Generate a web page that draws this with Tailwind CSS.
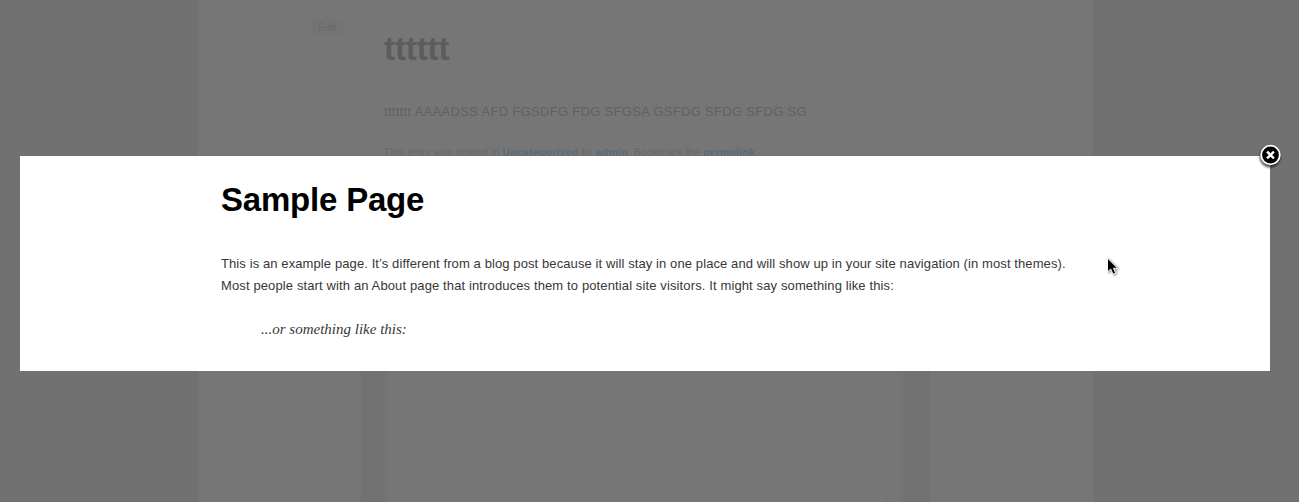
<!DOCTYPE html>
<html lang="en">
<head>
<meta charset="utf-8">
<title>Sample Page</title>
<script src="https://cdn.jsdelivr.net/npm/@tailwindcss/browser@4"></script>
</head>
<body class="relative h-[502px] overflow-hidden bg-[#717171] font-['Liberation_Sans',Arial,sans-serif]">
  <!-- Dimmed blog post -->
  <main class="ml-[198px] flex h-[502px] w-[895px] flex-col bg-[#767676]">
    <article class="flex h-[371px] shrink-0">
      <div class="w-[186px] pt-[19px] pl-[113px]">
        <a class="flex h-[17px] w-[32px] items-center justify-center rounded-[3px] bg-[#747474] text-[10.5px] text-[#696969]">Edit</a>
      </div>
      <div class="whitespace-nowrap">
        <h1 class="mt-[25px] text-[33px] leading-[48px] font-bold tracking-[-0.1px] text-[#5c5c5c]">tttttt</h1>
        <p class="mt-[28px] text-[13px] leading-[22px] tracking-[0.31px] text-[#616161]">ttttttt AAAADSS AFD FGSDFG FDG SFGSA GSFDG SFDG SFDG SG</p>
        <p class="mt-[20px] text-[10.5px] leading-[18px] tracking-[0.09px] text-[#686868]">This entry was posted in <a class="font-bold tracking-[0.28px] text-[#5b6a74]">Uncategorized</a> by <a class="font-bold tracking-[0.28px] text-[#5b6a74]">admin</a>. Bookmark the <a class="font-bold tracking-[0.28px] text-[#5b6a74]">permalink</a>.</p>
      </div>
    </article>
    <footer class="flex flex-1">
      <div class="w-[163px]"></div>
      <div class="w-[27px] bg-gradient-to-r from-[#727272] from-85% to-[#767676]"></div>
      <div class="flex flex-1 items-end justify-end pr-[8px]">
        <svg class="h-[8px] w-[8px] fill-[#686868]" viewBox="0 0 8 8"><path d="M6 1h1v1H6zM3 4h1v1H3zM6 4h1v1H6zM0 7h1v1H0zM3 7h1v1H3zM6 7h1v1H6z"/></svg>
      </div>
      <div class="w-[30px] bg-gradient-to-l from-[#727272] from-85% to-[#767676]"></div>
      <div class="w-[163px]"></div>
    </footer>
  </main>

  <!-- Lightbox -->
  <section class="absolute top-[156px] left-[20px] h-[215px] w-[1250px] bg-white pl-[201px] whitespace-nowrap text-[#373737]">
    <h2 class="mt-[20px] text-[33px] leading-[48px] font-bold tracking-[-0.2px] text-black">Sample Page</h2>
    <div class="mt-[29px] text-[13px] leading-[22px]">
      <p><span class="tracking-[0.1px]">This is an example page. It’s different from a blog post because it will stay in one place and will show up in your site navigation (in most themes).</span><br><span class="tracking-[0.123px]">Most people start with an About page that introduces them to potential site visitors. It might say something like this:</span></p>
      <blockquote class="mt-[21px] ml-[40px] font-['Liberation_Serif',Georgia,serif] text-[15px] italic">...or something like this:</blockquote>
    </div>
    <svg class="absolute -top-[15px] -right-[15px] h-[30px] w-[30px]" viewBox="0 0 30 30">
      <defs><filter id="soft" x="-30%" y="-30%" width="160%" height="160%"><feGaussianBlur stdDeviation="1.3"/></filter></defs>
      <circle cx="15" cy="16" r="10.5" fill="#000" opacity=".65" filter="url(#soft)"/>
      <circle cx="15.5" cy="14" r="9.3" fill="#000" stroke="#fff" stroke-width="1.8"/>
      <path d="M12.9 11.4l5.2 5.2M18.1 11.4l-5.2 5.2" stroke="#fff" stroke-width="2.4" stroke-linecap="square"/>
    </svg>
  </section>

  <!-- Pointer -->
  <svg class="absolute top-[256px] left-[1104px] h-[24px] w-[18px] drop-shadow-[1px_1px_1px_rgba(0,0,0,0.45)]" viewBox="0 0 18 24">
    <path d="M3.5 2v14l3.2-3 2.3 5.3 2.8-1.2-2.3-4.8h4.2z" fill="#000" stroke="#fff" stroke-width="1"/>
  </svg>
</body>
</html>
